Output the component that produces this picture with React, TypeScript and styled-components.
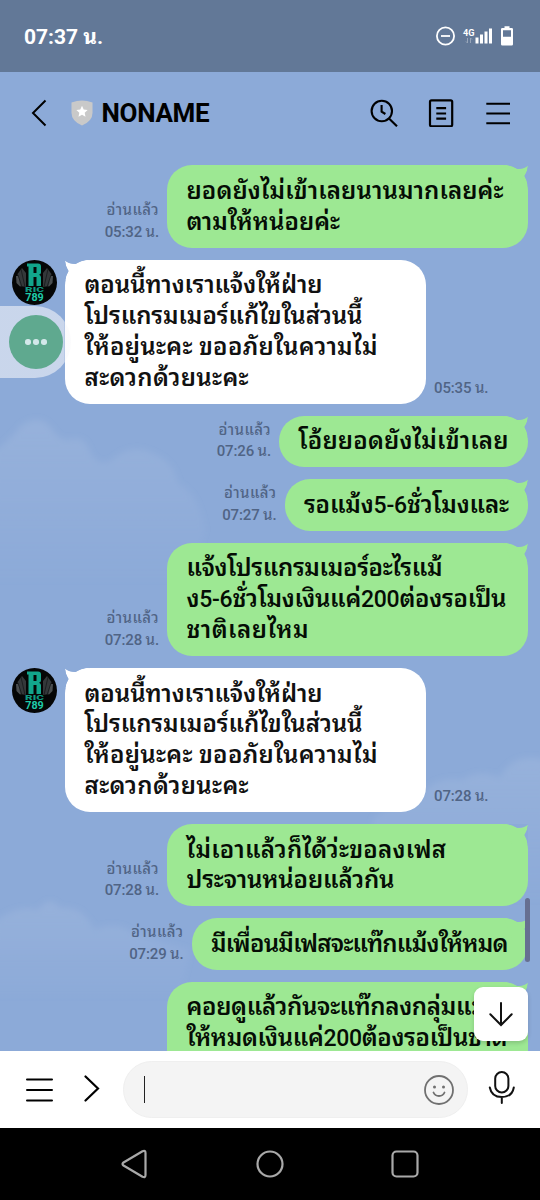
import React, { useLayoutEffect, useRef } from "react";
import styled, { createGlobalStyle } from "styled-components";

const Global = createGlobalStyle`
  *{box-sizing:border-box}
  html,body{margin:0;padding:0}
  body{font-family:Roboto,"Noto Sans Thai Looped","Noto Sans Thai",sans-serif;overflow:hidden}
  svg{display:block;flex:none}
`;
const Screen = styled.div`
  width:540px;height:1200px;display:flex;flex-direction:column;overflow:hidden;position:relative;background:#8caad8;
`;
const StatusBar = styled.div`
  height:72px;background:#627897;color:#fff;display:flex;align-items:center;justify-content:space-between;padding:0 26px 0 24px;flex:none;
`;
const Clock = styled.div`font-size:21px;font-weight:700;line-height:30px;white-space:nowrap;padding-top:1px;`;
const Header = styled.div`
  height:82px;flex:none;display:flex;align-items:center;padding:0 29px 0 31px;
`;
const Shield = styled.svg`margin-left:23.5px;`;
const Title = styled.h1`
  margin:0 auto 0 9px;font-size:26px;line-height:32px;font-weight:700;color:#000;letter-spacing:-0.3px;
`;
const HeaderIcons = styled.div`display:flex;align-items:center;gap:29px;`;
const Chat = styled.div`
  flex:1;min-height:0;overflow:hidden;display:flex;flex-direction:column;gap:12px;padding:11.3px 12px 0;position:relative;
`;
const Sky = styled.svg`position:absolute;left:0;top:0;`;
const Row = styled.div<{ $mine?: boolean }>`
  display:flex;flex:none;position:relative;justify-content:${(p) => (p.$mine ? "flex-end" : "flex-start")};
`;
const Bubble = styled.div<{ $mine?: boolean; $w: number }>`
  position:relative;width:${(p) => p.$w}px;padding:10.6px 0 10.2px 19.5px;border-radius:25px;
  background:${(p) => (p.$mine ? "#9de893" : "#fff")};color:${(p) => (p.$mine ? "#050d05" : "#111")};
`;
const Tail = styled.svg<{ $mine?: boolean }>`
  position:absolute;top:0;${(p) => (p.$mine ? "right:0;" : "left:0;transform:scaleX(-1);")}
`;
const Line = styled.div`
  position:relative;height:30.8px;line-height:30.8px;font-size:24px;font-weight:580;white-space:nowrap;
`;
const Digits = styled.span`font-size:23px;font-weight:500;line-height:1;`;
const Meta = styled.div<{ $mine?: boolean }>`
  align-self:flex-end;display:flex;flex-direction:column;font-size:15px;font-weight:500;line-height:21.5px;color:#506485;white-space:nowrap;
  padding-bottom:4.5px;
  ${(p) => (p.$mine ? "margin-right:8px;align-items:flex-end;" : "margin-left:8px;")}
`;
const AvatarBox = styled.div`width:53px;flex:none;`;
const FloatTab = styled.div`
  position:absolute;left:0;top:306px;width:71px;height:72px;border-radius:0 36px 36px 0;
  background:linear-gradient(90deg,rgba(225,231,243,.72) 64px,rgba(240,240,245,.25) 65px);
  display:flex;align-items:center;padding-left:9px;
`;
const FloatButton = styled.div`
  width:54px;height:54px;border-radius:50%;background:#5fa98f;display:flex;align-items:center;justify-content:center;gap:2.5px;
`;
const Dot = styled.i`width:5.5px;height:5.5px;border-radius:50%;background:#d3e8ea;`;
const ScrollThumb = styled.div`position:absolute;left:525px;top:898px;width:5px;height:64px;border-radius:3px;background:#666f91;`;
const DownButton = styled.div`
  position:absolute;left:474px;top:987px;width:54px;height:54px;border-radius:9px;background:#fff;box-shadow:0 2px 4px rgba(0,0,0,.16);
  display:flex;align-items:center;justify-content:center;
`;
const Composer = styled.div`
  height:77px;flex:none;background:#fff;display:flex;align-items:center;padding:0 24px;
`;
const Chevron = styled.svg`margin:0 0 2px 29px;`;
const Mic = styled.svg`margin-bottom:3px;`;
const Field = styled.div`
  width:345px;height:57px;border-radius:29px;background:#f4f4f4;border:1px solid #efefef;margin:0 20px 0 22px;
  display:flex;align-items:center;justify-content:space-between;padding:0 12px 0 20px;
`;
const Caret = styled.div`width:1.3px;height:27px;background:#222;`;
const NavBar = styled.div`
  height:72px;flex:none;background:#000;display:flex;align-items:center;justify-content:center;gap:105px;
`;

// Spreads the letters of a text evenly so that it takes the given width; numbers keep their own size.
function Fit({ w, text, digits }: { w: number; text: string; digits?: boolean }) {
  const ref = useRef<HTMLSpanElement>(null);
  useLayoutEffect(() => {
    const el = ref.current;
    if (!el || !w) return;
    el.style.letterSpacing = "0px";
    const base = el.getBoundingClientRect().width;
    el.style.letterSpacing = "1px";
    const count = el.getBoundingClientRect().width - base;
    if (count > 1) el.style.letterSpacing = (w - base) / (count - 1) + "px";
  }, [w, text]);
  return (
    <span ref={ref}>
      {digits ? text.split(/([\d-]+)/).map((part, i) => (i % 2 ? <Digits key={i}>{part}</Digits> : part)) : text}
    </span>
  );
}

const Avatar = () => (
  <svg width="45" height="45" viewBox="0 0 45 45">
    <circle cx="22.5" cy="22.5" r="22.5" fill="#050606" />
    <path d="M10 8 5.500 14 8 26l6 1V13zM35 8l4.500 6L37 26l-6 1V13z" fill="#34383a" />
    <path d="M4 16 4.500 23l4 4-2-11zM41 16l-.5 7-4 4 2-11z" fill="#4a4e50" />
    <path d="m9 9 4 18M36 9l-4 18M6 15l4 12M39 15l-4 12" stroke="#15191a" strokeWidth=".8" />
    <path fillRule="evenodd" d="M15 3.500H26q3 0 3 3v6q0 2-2 2.300 2 .5 2 2.500V26h-4.500V17h-3v9h-5V6.500H15zM21.500 7V13h3V7z" fill="#12a58b" />
    <text x="22.500" y="31.700" textAnchor="middle" fontFamily="Roboto" fontWeight="900" fontSize="6.500" textLength="19" lengthAdjust="spacingAndGlyphs" fill="#0e9a83">RIC</text>
    <text x="22.500" y="40.800" textAnchor="middle" fontFamily="Roboto" fontWeight="700" fontSize="10.800" textLength="18.500" lengthAdjust="spacingAndGlyphs" fill="#1fcdaa">789</text>
  </svg>
);

type Msg = { mine?: boolean; w: number; time: string; lines: [string, number][] };
const reply: [string, number][] = [
  ["ตอนนี้ทางเราแจ้งให้ฝ่าย", 238],
  ["โปรแกรมเมอร์แก้ไขในส่วนนี้", 278],
  ["ให้อยู่นะคะ ขออภัยในความไม่", 293],
  ["สะดวกด้วยนะคะ", 164],
];
const messages: Msg[] = [
  { mine: true, w: 361, time: "05:32 น.", lines: [["ยอดยังไม่เข้าเลยนานมากเลยค่ะ", 317], ["ตามให้หน่อยค่ะ", 153.5]] },
  { w: 361, time: "05:35 น.", lines: reply },
  { mine: true, w: 249, time: "07:26 น.", lines: [["โอ้ยยอดยังไม่เข้าเลย", 210]] },
  { mine: true, w: 243.5, time: "07:27 น.", lines: [["รอแม้ง5-6ชั่วโมงและ", 205]] },
  { mine: true, w: 361, time: "07:28 น.", lines: [["แจ้งโปรแกรมเมอร์อะไรแม้", 256], ["ง5-6ชั่วโมงเงินแค่200ต่องรอเป็น", 320], ["ชาติเลยไหม", 122]] },
  { w: 361, time: "07:28 น.", lines: reply },
  { mine: true, w: 361, time: "07:28 น.", lines: [["ไม่เอาแล้วก็ได้ว่ะขอลงเฟส", 259.5], ["ประจานหน่อยแล้วกัน", 208]] },
  { mine: true, w: 336.5, time: "07:29 น.", lines: [["มีเพื่อนมีเฟสจะแท๊กแม้งให้หมด", 297.5]] },
  { mine: true, w: 361, time: "", lines: [["คอยดูแล้วกันจะแท๊กลงกลุ่มแม้ง", 313], ["ให้หมดเงินแค่200ต้องรอเป็นชาติ", 321], ["", 0]] },
];

function Message({ m }: { m: Msg }) {
  const meta = m.time && (
    <Meta $mine={m.mine}>
      {m.mine && <Fit w={52} text="อ่านแล้ว" />}
      <Fit w={54.5} text={m.time} />
    </Meta>
  );
  return (
    <Row $mine={m.mine}>
      {m.mine ? meta : <AvatarBox><Avatar /></AvatarBox>}
      <Bubble $mine={m.mine} $w={m.w}>
        <Tail $mine={m.mine} width="26" height="26" viewBox="0 0 26 26">
          <path d="M2 0Q10 0 15.500 4Q21.500 4 26 .5Q25.500 7 22.500 11Q25 15 25.500 20L10 20z" fill={m.mine ? "#9de893" : "#fff"} />
          <path d="M14.500 3.600Q21.500 4.400 26 .5V0H5Q10 .5 14.500 3.600zM26 .5Q25.500 6.500 22.500 11Q25.500 15.500 26 22z" fill="#8caad8" />
        </Tail>
        {m.lines.map(([t, w], i) => <Line key={i}><Fit w={w} text={t} digits /></Line>)}
      </Bubble>
      {!m.mine && meta}
    </Row>
  );
}

const Clouds = () => (
  <Sky width="540" height="897" viewBox="0 154 540 897">
    <defs>
      <linearGradient id="fade" x1="0" y1="0" x2="0" y2="1">
        <stop offset="0" stopColor="#b4c6e4" stopOpacity=".26" />
        <stop offset="1" stopColor="#b4c6e4" stopOpacity="0" />
      </linearGradient>
      <filter id="soft"><feGaussianBlur stdDeviation="3" /></filter>
    </defs>
    <g fill="url(#fade)" filter="url(#soft)">
      <path d="M-6 452Q10 440 22 425Q42 412 54 432Q60 440 68 440Q84 434 90 452Q98 468 112 460Q132 442 154 454Q174 462 178 484Q198 492 205 530L190 585H-6z" />
      <path d="M372 820Q395 800 418 802Q430 775 462 780Q480 768 500 778Q512 752 546 760V905H380z" />
      <path d="M-6 922Q18 904 38 910Q50 894 60 908Q84 906 94 930Q118 920 134 934L190 950 180 1000H-6z" />
    </g>
  </Sky>
);

export default function App() {
  return (
    <Screen>
      <Global />
      <StatusBar>
        <Clock>07:37 น.</Clock>
        <svg width="78" height="24" viewBox="436 24 78 24">
          <circle cx="445.500" cy="36" r="8.600" fill="none" stroke="#fff" strokeWidth="1.800" />
          <path d="M441 36h9" stroke="#fff" strokeWidth="1.800" />
          <text x="463" y="36" fontSize="9" fontWeight="700" textLength="11.500" lengthAdjust="spacingAndGlyphs" fill="#fff">4G</text>
          <path d="M467.500 38v5M466 41.500l1.500 1.500M470.500 43v-5M470.500 38l1.500 1.500" stroke="#97a5b9" strokeWidth="1" fill="none" />
          <path d="M475.500 37.500h3V43.500h-3zM480 34.500h3v9h-3zM484.500 31.500h3v12h-3zM489 28.500h3v15h-3z" fill="#fff" />
          <path fillRule="evenodd" d="M504.500 26.300h5v1.700h2.200q1.300 0 1.300 1.300v15q0 1.300-1.300 1.300h-9.400q-1.300 0-1.300-1.300v-15q0-1.300 1.300-1.300h2.200zM503 30.300v6.400h8v-6.400z" fill="#fff" />
        </svg>
      </StatusBar>
      <Header>
        <svg width="16" height="28" viewBox="0 0 16 28" fill="none" stroke="#000" strokeWidth="2"><path d="M14.500 1.500 2 14 14.500 26.500" /></svg>
        <Shield width="22" height="26" viewBox="0 0 22 26">
          <path d="M11 .5Q16 .5 21.500 2.500V13Q21.500 21 11 25.500Q.5 21 .5 13V2.500Q6 .5 11 .5z" fill="#c9c9c9" />
          <path d="m11 5.800 1.700 3.700 3.900.5-2.900 2.700.8 4L11 14.700l-3.500 2 .8-4L5.400 10l3.900-.5z" fill="#fff" />
        </Shield>
        <Title>NONAME</Title>
        <HeaderIcons>
          <svg width="28" height="28" viewBox="370 98 28 28" fill="none" stroke="#000" strokeWidth="2.100">
            <circle cx="381.800" cy="110" r="10.200" /><path d="m389 117.500 8 7.800M381.600 104v6.600l3.800 2.400" />
          </svg>
          <svg width="28" height="28" viewBox="427 98 28 28" fill="none" stroke="#000" strokeWidth="2.200">
            <rect x="430" y="99.300" width="22.200" height="26" rx="1.500" /><path d="M436.300 107.200h9.800M436.300 112.500h9.800M436.300 117.700h9.800" />
          </svg>
          <svg width="27" height="28" viewBox="484 98 27 28" stroke="#000" strokeWidth="2.100"><path d="M486.300 102.700H510M486.300 112.500H510M486.300 122.300H510" /></svg>
        </HeaderIcons>
      </Header>
      <Chat>
        <Clouds />
        {messages.map((m, i) => <Message key={i} m={m} />)}
      </Chat>
      <FloatTab><FloatButton><Dot /><Dot /><Dot /></FloatButton></FloatTab>
      <ScrollThumb />
      <DownButton>
        <svg width="26" height="26" viewBox="0 0 26 26" fill="none" stroke="#111" strokeWidth="2" strokeLinecap="round"><path d="M13 2v22M2.300 13.300 13 24l10.700-10.700" /></svg>
      </DownButton>
      <Composer>
        <svg width="30" height="28" viewBox="0 0 30 28" stroke="#000" strokeWidth="2" strokeLinecap="round"><path d="M3 3.500h25M3 14h25M3 24.500h25" /></svg>
        <Chevron width="18" height="28" viewBox="0 0 18 28" fill="none" stroke="#000" strokeWidth="2.200" strokeLinecap="round"><path d="M2.500 1.500 15 13.500 2.500 25.500" /></Chevron>
        <Field>
          <Caret />
          <svg width="32" height="32" viewBox="0 0 32 32" fill="none" stroke="#707070" strokeWidth="1.800">
            <circle cx="16" cy="16" r="14" /><path d="M10.500 18.500q1.500 3.500 5.500 3.500t5.500-3.500" strokeLinecap="round" />
            <g fill="#707070" stroke="none"><circle cx="11.500" cy="13" r="1.500" /><circle cx="20.500" cy="13" r="1.500" /></g>
          </svg>
        </Field>
        <Mic width="28" height="36" viewBox="0 0 28 36" fill="none" stroke="#111" strokeWidth="2" strokeLinecap="round">
          <rect x="7.200" y="2" width="13.200" height="20.500" rx="6.600" /><path d="M1.800 17.500q1.700 9.500 12 9.500t12-9.500M13.800 27v6" />
        </Mic>
      </Composer>
      <NavBar>
        <svg width="30" height="30" viewBox="0 0 30 30" fill="none" stroke="#a9a9a9" strokeWidth="2.200" strokeLinejoin="round"><path d="M3.500 13.500 22.500 2.300q3-1.300 3 1.700v22q0 3-3 1.700L3.500 16.500q-2-1.500 0-3z" /></svg>
        <svg width="30" height="30" viewBox="0 0 30 30" fill="none" stroke="#a9a9a9" strokeWidth="2.200"><circle cx="15" cy="15" r="12.500" /></svg>
        <svg width="30" height="30" viewBox="0 0 30 30" fill="none" stroke="#a9a9a9" strokeWidth="2.200"><rect x="2.500" y="2.500" width="25" height="25" rx="4" /></svg>
      </NavBar>
    </Screen>
  );
}
